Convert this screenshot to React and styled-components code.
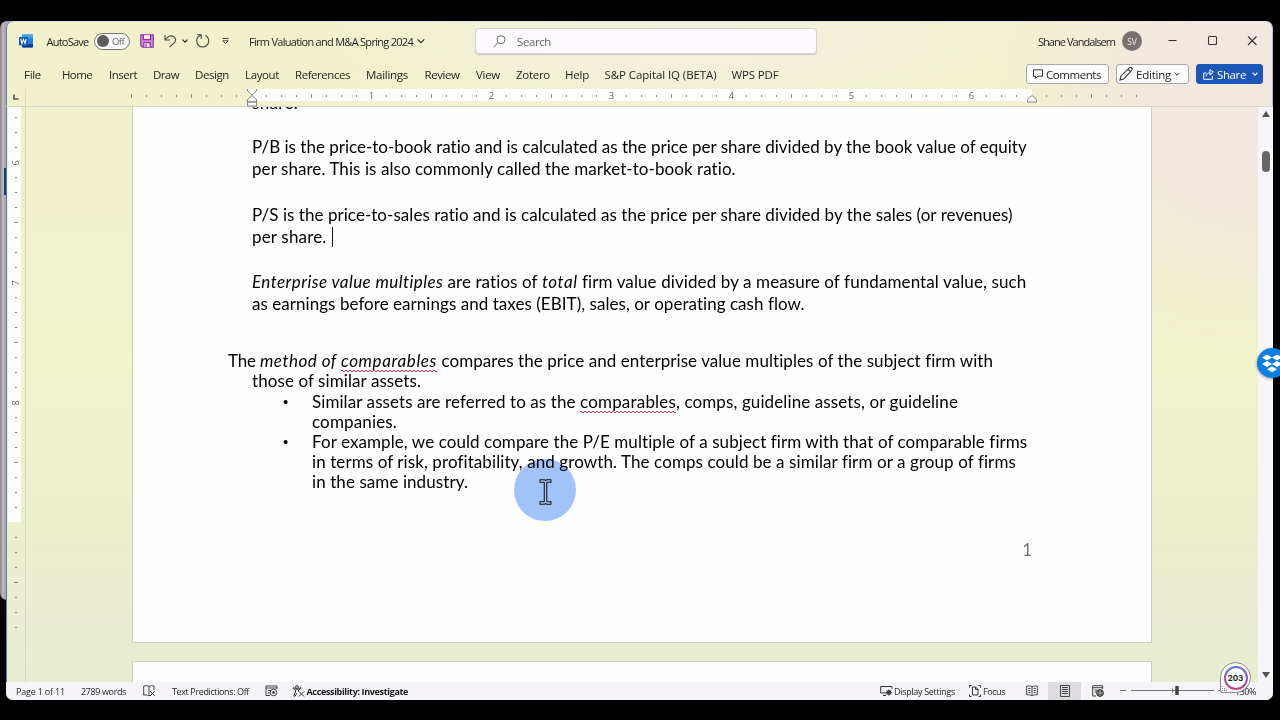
import { useLayoutEffect, useRef, useState } from "react";
import styled, { createGlobalStyle } from "styled-components";

const GlobalStyle = createGlobalStyle`
  * {
    box-sizing: border-box;
  }

  body {
    margin: 0;
    background: #000;
    overflow: hidden;
    font-family: "Open Sans", "Noto Sans", sans-serif;
    color: #262626;
  }

  svg {
    display: block;
    flex: none;
  }
`;

const Desktop = styled.div`
  position: relative;
  width: 1280px;
  height: 720px;
  padding: 21px 7px 20px 6px;
  background: #000;
`;

const BackWindow = styled.div`
  position: absolute;
  left: 0;
  top: 21px;
  width: 16px;
  height: 579px;
  border-radius: 7px;
  background: linear-gradient(90deg, #8f8b91 0 1px, #b9b3ba 2px 4px, #a8a4b0 5px);
`;

const BackWindowMark = styled.div`
  position: absolute;
  left: 4px;
  top: 147px;
  width: 2px;
  height: 27px;
  background: #163a75;
`;

const Window = styled.div`
  position: relative;
  display: flex;
  flex-direction: column;
  width: 1267px;
  height: 679px;
  border-radius: 7px;
  overflow: hidden;
  box-shadow: inset 1px 0 0 #5c7ba5, inset -1px 0 0 #b8bce8, inset 0 1px 0 #e2e0ee;
  background:
    radial-gradient(ellipse 250px 250px at 1235px 80px, #f2e8e2 25%, rgba(242, 232, 226, 0) 100%),
    radial-gradient(ellipse 420px 90px at 690px 20px, rgba(244, 240, 227, 0.9), rgba(244, 240, 227, 0)),
    linear-gradient(180deg, #f1f1cc 0%, #f1f3cb 50%, #eef1cb 68%, #e9ecd2 88%, #e8edd0 100%);
`;

const TitleBar = styled.header`
  display: flex;
  align-items: center;
  height: 40px;
  padding-left: 13px;
`;

const TitleGap = styled.span`
  flex: none;
  width: ${(props) => props.$w}px;
`;

const Toggle = styled.div`
  display: flex;
  align-items: center;
  justify-content: space-between;
  width: 36px;
  height: 17px;
  padding: 0 5px 0 2px;
  border: 1px solid #77746f;
  border-radius: 9px;
  background: #fdfcfd;
`;

const ToggleKnob = styled.span`
  width: 12px;
  height: 12px;
  border-radius: 50%;
  background: #5f5c60;
`;

const SearchBox = styled.div`
  display: flex;
  align-items: center;
  width: 342px;
  height: 26px;
  padding-left: 17px;
  gap: 11px;
  border: 1px solid #d3d1d4;
  border-radius: 4px;
  background: #fdfbfe;
  box-shadow: 0 1px 1px #c8c6c8;
`;

const Avatar = styled.div`
  display: flex;
  align-items: center;
  justify-content: center;
  width: 20px;
  height: 20px;
  border-radius: 50%;
  background: #78736f;
  color: #e5e2e2;
  font-size: 8.5px;
`;

const TabBar = styled.nav`
  display: flex;
  align-items: center;
  height: 26px;
  margin-bottom: 2px;
  padding-left: 18px;
`;

const TabActions = styled.div`
  display: flex;
  gap: 7px;
  margin-left: auto;
  padding-right: 10px;
`;

const ActionButton = styled.button`
  display: flex;
  align-items: center;
  gap: ${(props) => props.$gap || 3}px;
  width: ${(props) => props.$width}px;
  height: 20px;
  padding: 0 0 0 ${(props) => props.$pad}px;
  border: 1px solid ${(props) => (props.$primary ? "#1b56b8" : "#aaa8a6")};
  border-radius: 3px;
  background: ${(props) => (props.$primary ? "#1b56b8" : "#fefdfe")};
  color: ${(props) => (props.$primary ? "#fff" : "#262626")};
  font-family: inherit;
`;

const RulerRow = styled.div`
  height: 18px;
  border-bottom: 1px solid #d6d6c8;
`;

const Workspace = styled.div`
  display: flex;
  flex: 1;
  min-height: 0;
`;

const SideRuler = styled.div`
  flex: none;
  width: 20px;
  border-right: 1px solid #d9d9c4;
`;

const Canvas = styled.main`
  flex: 1;
  min-width: 0;
  padding-left: 106px;
  overflow: hidden;
`;

const Page = styled.article`
  width: 1020px;
  height: ${(props) => props.$height}px;
  margin-bottom: 18px;
  padding: 0 0 0 95px;
  border: 1px solid #cfcfc8;
  border-top-width: ${(props) => (props.$continued ? 0 : 1)}px;
  background: #fefefe;
  overflow: hidden;
`;

const Paragraph = styled.div`
  margin-left: ${(props) => props.$indent || 0}px;
  margin-top: ${(props) => props.$space || 0}px;
  font-family: Lato, "Open Sans", sans-serif;
  font-size: 17px;
  line-height: ${(props) => props.$leading || 22.2}px;
  color: #000;
`;

const TextLine = styled.div`
  display: flex;
  margin-left: ${(props) => props.$indent || 0}px;
`;

const Bullet = styled.span`
  width: 30px;
  padding-left: 1px;
  margin-left: -30px;
  font-family: "Liberation Sans", sans-serif;
  font-size: 15px;
`;

const Misspelled = styled.span`
  padding-bottom: 1px;
  margin-bottom: -1px;
  background:
    linear-gradient(45deg, transparent 35%, #d3324a 35% 65%, transparent 65%) left bottom / 4px 2px repeat-x,
    linear-gradient(135deg, transparent 35%, #d3324a 35% 65%, transparent 65%) 2px 100% / 4px 2px repeat-x;
`;

const Caret = styled.span`
  width: 1px;
  height: 20px;
  margin: 1px 0 -1px 5px;
  background: #111;
`;

const PageNumber = styled.div`
  margin-top: 45.5px;
  padding-right: 119px;
  text-align: right;
  font-family: Lato, "Open Sans", sans-serif;
  font-size: 17px;
  line-height: 24px;
  color: #777;
`;

const ScrollBar = styled.div`
  display: flex;
  flex-direction: column;
  align-items: center;
  width: 15px;
  padding: 4px 0 4px;
  background: #f7f5f9;
`;

const ScrollThumb = styled.div`
  width: 8px;
  height: 21px;
  margin: 34px 0 auto;
  border-radius: 4px;
  background: #69666a;
`;

const StatusBar = styled.footer`
  display: flex;
  align-items: center;
  height: 18px;
  padding-left: 10px;
  background: #f6f4f8;
`;

const ViewButton = styled.span`
  display: flex;
  align-items: center;
  justify-content: center;
  width: 33px;
  height: 18px;
  background: ${(props) => (props.$selected ? "#dddbdf" : "none")};
`;

const FittedText = styled.span`
  display: block;
  flex: none;
  width: ${(props) => props.$width}px;
  white-space: pre;
  font-size: ${(props) => (props.$size ? `${props.$size}px` : "inherit")};
  font-weight: ${(props) => (props.$bold ? 700 : "inherit")};
  color: ${(props) => props.$color || "inherit"};
`;

const PointerHalo = styled.div`
  position: absolute;
  left: 514px;
  top: 459px;
  width: 62px;
  height: 62px;
  border-radius: 50%;
  background: #a1c4fa;
  mix-blend-mode: multiply;
`;

const PointerIcon = styled.svg`
  position: absolute;
  left: 538px;
  top: 478px;
`;

const DropboxBadge = styled.div`
  position: absolute;
  left: 1257px;
  top: 348px;
  width: 30px;
  height: 30px;
  padding: 6px 0 0 5px;
  border-radius: 50%;
  background: #0d7fe0;
  box-shadow: 0 1px 3px rgba(40, 60, 90, 0.5);
`;

const CounterBadge = styled.div`
  position: absolute;
  left: 1220px;
  top: 662px;
  display: flex;
  align-items: center;
  justify-content: center;
  width: 31px;
  height: 31px;
  border: 1px solid #8b898f;
  border-radius: 50% 50% 50% 2px;
  background: #fdfbfd;
`;

const CounterRing = styled.div`
  display: flex;
  align-items: center;
  justify-content: center;
  width: 24px;
  height: 24px;
  border: 2px solid transparent;
  border-radius: 50%;
  background:
    linear-gradient(#fff, #fff) padding-box,
    linear-gradient(#577fd8, #8d5bb0 50%, #c4427d) border-box;
  font-family: Inter, sans-serif;
  font-size: 8px;
  font-weight: 700;
`;

const CounterGrip = styled.svg`
  position: absolute;
  left: 1px;
  bottom: 1px;
`;

// Spreads the letters so the text takes exactly the given width
function Fit({ width, size, bold, color, children }) {
  const ref = useRef(null);
  const [spacing, setSpacing] = useState(0);

  useLayoutEffect(() => {
    const range = document.createRange();
    range.selectNodeContents(ref.current);
    const natural = range.getBoundingClientRect().width;
    setSpacing((width - natural) / ref.current.textContent.length);
  }, [width]);

  return (
    <FittedText
      ref={ref}
      $width={width}
      $size={size}
      $bold={bold}
      $color={color}
      style={{ letterSpacing: `${spacing}px` }}
    >
      {children}
    </FittedText>
  );
}

const tabs = [
  { label: "File", x: 24, width: 17 },
  { label: "Home", x: 62, width: 30 },
  { label: "Insert", x: 109, width: 28 },
  { label: "Draw", x: 153, width: 26 },
  { label: "Design", x: 195, width: 34 },
  { label: "Layout", x: 245, width: 34 },
  { label: "References", x: 295, width: 55 },
  { label: "Mailings", x: 366, width: 42 },
  { label: "Review", x: 424.5, width: 35 },
  { label: "View", x: 476, width: 24 },
  { label: "Zotero", x: 516, width: 34 },
  { label: "Help", x: 565, width: 24 },
  { label: "S&P Capital IQ (BETA)", x: 604.5, width: 112 },
  { label: "WPS PDF", x: 731.5, width: 47 },
];

const Chevron = ({ size = 8, width = 1.1 }) => (
  <svg width={size} height={size} viewBox="0 0 8 8" fill="none" stroke="currentColor" strokeWidth={width}>
    <path d="M.7 2.3 4 5.6 7.3 2.3" />
  </svg>
);

const WordIcon = () => (
  <svg width="14" height="14" viewBox="0 0 14 14">
    <rect x="3" y=".5" width="11" height="13" rx="1" fill="#2b7cd3" />
    <path d="M3 1.5a1 1 0 0 1 1-1h9a1 1 0 0 1 1 1V4H3z" fill="#41a5ee" />
    <path d="M3 10h11v2.5a1 1 0 0 1-1 1H4a1 1 0 0 1-1-1z" fill="#103f91" />
    <rect x="0" y="3" width="9" height="8.5" rx="1" fill="#185abd" />
    <path d="m1.8 5 1.1 4.4L4.5 5.4 6 9.4 7.2 5" fill="none" stroke="#fff" strokeWidth="1.1" />
  </svg>
);

const SaveIcon = () => (
  <svg width="14" height="14" viewBox="0 0 14 14" fill="none" stroke="#95309c" strokeWidth="1.2">
    <path d="M.8.8h12.4v12.4H2.6L.8 11.4z" fill="#d28edb" />
    <path d="M3.4 1v4.6h7.2V1M3.8 13V8.6h6.4V13" fill="#f7eaf5" />
    <path d="M6 10v3" />
  </svg>
);

const HorizontalRuler = () => {
  const marks = [];
  for (let i = 0; i <= 67; i++) {
    const offset = i * 15 - 120;
    const x = 246 + offset;
    if (offset === 0 || offset === 780) continue;
    if (offset > 0 && offset < 780 && offset % 120 === 0) {
      marks.push(
        <text key={i} x={x - 0.5} y="10.3" textAnchor="middle" fontSize="9.5" fill="#666">
          {offset / 120}
        </text>
      );
    } else {
      const tall = offset % 60 === 0;
      marks.push(<rect key={i} x={x - 1} y={tall ? 5 : 6} width="1" height={tall ? 4 : 2} fill="#8d8c85" />);
    }
  }

  return (
    <svg width="1266" height="20" viewBox="0 0 1266 20">
      <rect x="246" width="780" height="12" fill="#fefefe" />
      <path d="M8 5.5v4.5h4.5" fill="none" stroke="#555" strokeWidth="1.7" />
      <path d="M19.5 0v18" stroke="#dddcc8" />
      {marks}
      <g fill="#fdfdfd" stroke="#858585">
        <path d="M241.5-.5h9v2.5l-4.5 4-4.5-4zM246 6.5l4.5 4v2.5h-9v-2.5zM241.5 13h9v4h-9z" />
        <path d="m1026 6.5 4.5 4v2.5h-9v-2.5z" />
      </g>
    </svg>
  );
};

const VerticalRuler = () => {
  const marks = [];
  for (let y = 11; y <= 521; y += 15) {
    const fromSix = y - 56;
    if (y === 416) continue;
    if (fromSix % 120 === 0 && y < 416) {
      marks.push(
        <text key={y} transform={`translate(13 ${y}) rotate(-90)`} textAnchor="middle" fontSize="9" fill="#666">
          {6 + fromSix / 120}
        </text>
      );
    } else {
      const tall = fromSix % 60 === 0;
      marks.push(<rect key={y} x={tall ? 8 : 9} y={y - 1} width={tall ? 4 : 2} height="1" fill="#8d8c85" />);
    }
  }

  return (
    <svg width="19" height="575" viewBox="0 0 19 575">
      <rect x="2" width="13" height="415" fill="#fefefe" />
      {marks}
    </svg>
  );
};

const QuickAccess = () => (
  <>
    <WordIcon />
    <TitleGap $w={13.5} />
    <Fit width={42} size={11}>AutoSave</Fit>
    <TitleGap $w={5.5} />
    <Toggle>
      <ToggleKnob />
      <Fit width={12} size={9.5} color="#666">Off</Fit>
    </Toggle>
    <TitleGap $w={10} />
    <SaveIcon />
    <TitleGap $w={10} />
    <svg width="14" height="14" viewBox="0 0 14 14" fill="none" stroke="#4d4c45" strokeWidth="1.1">
      <path d="M1 1v5h5M1.3 5.8C3.500 2.5 7 .8 9.700 2.6c2.500 1.800 2.400 4.300.5 6.200L5.500 13.200" />
    </svg>
    <TitleGap $w={4} />
    <Chevron size={6} width={1.5} />
    <TitleGap $w={8} />
    <svg width="14" height="14" viewBox="0 0 14 14" fill="none" stroke="#4d4c45" strokeWidth="1.1">
      <path d="M1 .8h4.2V5M5 1.2C2.5 2 .7 4.2.7 7a6 6 0 0 0 12 0c0-2.4-1.3-4.4-3.4-5.4" />
    </svg>
    <TitleGap $w={12} />
    <svg width="7" height="8" viewBox="0 0 7 8" fill="none" stroke="#444" strokeWidth="1">
      <path d="M.5 1.5h6M.8 3.8h5.4L3.5 6.5z" />
    </svg>
  </>
);

const documentTop = [
  { text: "P/B is the price-to-book ratio and is calculated as the price per share divided by the book value of equity", width: 775 },
  { text: "per share. This is also commonly called the market-to-book ratio.", width: 484 },
];

export default function App() {
  return (
    <>
      <GlobalStyle />
      <Desktop>
        <BackWindow>
          <BackWindowMark />
        </BackWindow>

        <Window>
          <TitleBar>
            <QuickAccess />
            <TitleGap $w={20} />
            <Fit width={164} size={11}>Firm Valuation and M&A Spring 2024</Fit>
            <TitleGap $w={4} />
            <Chevron />
            <TitleGap $w={50} />
            <SearchBox>
              <svg width="13" height="13" viewBox="0 0 13 13" fill="none" stroke="#666" strokeWidth="1">
                <circle cx="8" cy="4.7" r="4" />
                <path d="M5 7.6.7 12.3" />
              </svg>
              <Fit width={34} size={11.5} color="#666">Search</Fit>
            </SearchBox>
            <TitleGap $w={221} />
            <Fit width={77} size={11}>Shane Vandalsem</Fit>
            <TitleGap $w={7} />
            <Avatar>SV</Avatar>
            <TitleGap $w={26} />
            <svg width="89" height="12" viewBox="0 0 89 12" fill="none" stroke="#333" strokeWidth="1.1">
              <path d="M.5 5.5h8M80 1.5l8.5 8.5M88.5 1.5 80 10" />
              <rect x="40.5" y="1.5" width="8" height="8" rx="1" />
            </svg>
          </TitleBar>

          <TabBar>
            {tabs.map((tab, i) => {
              const previous = tabs[i - 1];
              const gap = previous ? tab.x - previous.x - previous.width : 0;
              return (
                <span key={tab.label} style={{ marginLeft: gap }}>
                  <Fit width={tab.width} size={11.5}>{tab.label}</Fit>
                </span>
              );
            })}
            <TabActions>
              <ActionButton $width={83} $pad={6}>
                <svg width="10" height="10" viewBox="0 0 10 10" fill="none" stroke="#333">
                  <path d="M.5.8h9v6.400H5L2.500 9.500V7.200h-2z" />
                </svg>
                <Fit width={55} size={11.5}>Comments</Fit>
              </ActionButton>
              <ActionButton $width={73} $pad={2}>
                <svg width="14" height="14" viewBox="0 0 14 14" fill="none" stroke="#333" strokeWidth="1.1">
                  <path d="m1 13 .9-3.8L10.3.9c.7-.6 1.5-.5 2.2.1.7.8.8 1.6.1 2.3L4.7 12zM9 2.3l2.6 2.6" />
                </svg>
                <Fit width={35} size={11.5}>Editing</Fit>
                <Chevron size={6} width={1.3} />
              </ActionButton>
              <ActionButton $width={67} $pad={6} $gap={3} $primary>
                <svg width="11" height="11" viewBox="0 0 11 11" fill="none" stroke="currentColor">
                  <path d="M3.5 4H.7v6.3h8.6V7M3 7.5c.4-2.5 2-3.7 4-3.7V6l3.3-2.9L7 .6v3.200" />
                </svg>
                <Fit width={29} size={11.5}>Share</Fit>
                <TitleGap $w={0} />
                <Chevron size={6} width={1.5} />
              </ActionButton>
            </TabActions>
          </TabBar>

          <RulerRow>
            <HorizontalRuler />
          </RulerRow>

          <Workspace>
            <SideRuler>
              <VerticalRuler />
            </SideRuler>

            <Canvas>
              <Page $height={536} $continued>
                <Paragraph $indent={24} $space={-15}>
                  <Fit width={46}>share.</Fit>
                </Paragraph>
                <Paragraph $indent={24} $space={22}>
                  {documentTop.map((line) => (
                    <Fit key={line.text} width={line.width}>{line.text}</Fit>
                  ))}
                </Paragraph>
                <Paragraph $indent={24} $space={23}>
                  <Fit width={761}>
                    P/S is the price-to-sales ratio and is calculated as the price per share divided by the sales (or revenues)
                  </Fit>
                  <TextLine>
                    <Fit width={74.5}>per share.</Fit>
                    <Caret />
                  </TextLine>
                </Paragraph>
                <Paragraph $indent={24} $space={22.6}>
                  <TextLine>
                    <Fit width={195.5}><i>Enterprise value multiples </i></Fit>
                    <Fit width={94.5}>are ratios of </Fit>
                    <Fit width={40}><i>total </i></Fit>
                    <Fit width={444}>firm value divided by a measure of fundamental value, such</Fit>
                  </TextLine>
                  <Fit width={553}>as earnings before earnings and taxes (EBIT), sales, or operating cash flow.</Fit>
                </Paragraph>
                <Paragraph $space={36.2} $leading={20.2}>
                  <TextLine>
                    <Fit width={32}>The </Fit>
                    <Fit width={81}><i>method of </i></Fit>
                    <Misspelled><Fit width={96}><i>comparables</i></Fit></Misspelled>
                    <Fit width={556}> compares the price and enterprise value multiples of the subject firm with</Fit>
                  </TextLine>
                  <TextLine $indent={24}>
                    <Fit width={169}>those of similar assets.</Fit>
                  </TextLine>
                  <TextLine $indent={84}>
                    <Bullet>•</Bullet>
                    <Fit width={268}>Similar assets are referred to as the </Fit>
                    <Misspelled><Fit width={96}>comparables</Fit></Misspelled>
                    <Fit width={282}>, comps, guideline assets, or guideline</Fit>
                  </TextLine>
                  <TextLine $indent={84}>
                    <Fit width={85}>companies.</Fit>
                  </TextLine>
                  <TextLine $indent={84}>
                    <Bullet>•</Bullet>
                    <Fit width={715}>For example, we could compare the P/E multiple of a subject firm with that of comparable firms</Fit>
                  </TextLine>
                  <TextLine $indent={84}>
                    <Fit width={703}>in terms of risk, profitability, and growth. The comps could be a similar firm or a group of firms</Fit>
                  </TextLine>
                  <TextLine $indent={84}>
                    <Fit width={156}>in the same industry.</Fit>
                  </TextLine>
                </Paragraph>
                <PageNumber>1</PageNumber>
              </Page>
              <Page $height={60} />
            </Canvas>

            <ScrollBar>
              <svg width="8" height="6" viewBox="0 0 8 6"><path d="M4 0 8 6H0z" fill="#555" /></svg>
              <ScrollThumb />
              <svg width="8" height="6" viewBox="0 0 8 6"><path d="M4 6 0 0h8z" fill="#555" /></svg>
            </ScrollBar>
          </Workspace>

          <StatusBar>
            <Fit width={49} size={9}>Page 1 of 11</Fit>
            <TitleGap $w={16} />
            <Fit width={45} size={9}>2789 words</Fit>
            <TitleGap $w={17} />
            <svg width="13" height="12" viewBox="0 0 13 12" fill="none" stroke="#444">
              <path d="M6 1.5v8M6 1.5C5 .6 2.5.6.7 1v9c2 0 4-.4 5.3 1l1-1M6 1.5C7.5.6 9.5.6 11 1v4M7 6l4.8 5M11.8 6 7 11" />
            </svg>
            <TitleGap $w={16} />
            <Fit width={77} size={9}>Text Predictions: Off</Fit>
            <TitleGap $w={16} />
            <svg width="13" height="12" viewBox="0 0 13 12" fill="none" stroke="#444">
              <path d="M5 10.5H1V1h11v3M1 3h11M3 5.5h3M3 8h2" />
              <circle cx="8.5" cy="7.5" r="3.3" />
              <circle cx="8.5" cy="7.5" r="1" fill="#333" />
            </svg>
            <TitleGap $w={14} />
            <svg width="13" height="12" viewBox="0 0 13 12" fill="none" stroke="#333">
              <circle cx="5" cy="2" r="1.4" />
              <path d="M1 3.5 3.5 5v2L1.8 11l1.2.3L5 8M9.5 3 6.5 5v1.5M1 3.5l.6-1L5 4.5l4-2M7 6.5l5 5M12 6.5l-5 5" />
            </svg>
            <TitleGap $w={1.5} />
            <Fit width={101.5} size={9} bold color="#151515">Accessibility: Investigate</Fit>
            <TitleGap $w={472} />
            <svg width="13" height="12" viewBox="0 0 13 12" fill="none" stroke="#333">
              <path d="M12 4V1.5H.7V8H6M3 10.5h3" />
              <circle cx="8.8" cy="7.5" r="2" />
              <path d="M8.8 4.5v6M5.8 7.5h6M6.7 5.4l4.2 4.2M10.9 5.4 6.7 9.6" />
            </svg>
            <TitleGap $w={1} />
            <Fit width={61} size={9}>Display Settings</Fit>
            <TitleGap $w={14} />
            <svg width="12" height="12" viewBox="0 0 12 12" fill="none" stroke="#333">
              <path d="M2.5.5h-2v2M9.5.5h2v2M2.5 11.5h-2v-2M9.5 11.5h2v-2M3.5 2h3L9 4.500V10H3.500zM6.500 2v2.500H9" />
            </svg>
            <TitleGap $w={2} />
            <Fit width={22} size={9}>Focus</Fit>
            <TitleGap $w={10} />
            <ViewButton>
              <svg width="12" height="12" viewBox="0 0 12 12" fill="none" stroke="#444">
                <path d="M6 1.8v9M6 1.8C4.5.8 2.5.8.7 1.2v8.6c2-.3 4 0 5.3 1 1.5-1 3.3-1.3 5.3-1V1.2C9.5.8 7.5.8 6 1.8M2.3 3.5h2M2.3 5.5h2M2.3 7.5h2M7.7 3.5h2M7.7 5.5h2M7.7 7.5h2" />
              </svg>
            </ViewButton>
            <ViewButton $selected>
              <svg width="10" height="12" viewBox="0 0 10 12" fill="none" stroke="#444">
                <path d="M.5.5h9v11h-9zM2 2.5h6M2 4.5h6M2 6.5h6M2 8.5h6" />
              </svg>
            </ViewButton>
            <ViewButton>
              <svg width="12" height="12" viewBox="0 0 12 12" fill="none" stroke="#444">
                <path d="M4 11H.7V.7h10V4M.7 2.7h10M2.5 5h3M2.5 7h2" />
                <circle cx="8" cy="8" r="3.4" fill="#444" />
                <path d="M5 8h6M8 5v6" stroke="#eee" strokeWidth=".6" />
              </svg>
            </ViewButton>
            <TitleGap $w={6} />
            <svg width="105" height="12" viewBox="0 0 105 12" fill="none" stroke="#777">
              <path d="M0 5.5h6M11 5.5h83M52.500 3.500v4M98 5.500h6" />
              <path d="M57 1v9" stroke="#444" strokeWidth="3.5" />
            </svg>
            <TitleGap $w={10} />
            <Fit width={21} size={9}>130%</Fit>
          </StatusBar>
        </Window>

        <PointerHalo />
        <PointerIcon width="15" height="28" viewBox="0 0 15 28">
          <path d="M1.500 3H6l1.500 1L9 3h4.500M7.500 4v20M1.500 25H6l1.500-1L9 25h4.500" fill="none" stroke="#111" strokeWidth="3.5" />
          <path d="M2.500 3H6l1.500 1L9 3h3.500M7.500 4v20M2.500 25H6l1.500-1L9 25h3.500" fill="none" stroke="#a9c8fa" strokeWidth="1.4" />
        </PointerIcon>

        <DropboxBadge>
          <svg width="20" height="19" viewBox="0 0 20 19" fill="#fff">
            <path d="m5 .5 5 3-5 3-5-3zM15 .5l5 3-5 3-5-3zM5 7l5 3-5 3-5-3zM15 7l5 3-5 3-5-3zM10 12.2l5 3-5 3-5-3z" />
          </svg>
        </DropboxBadge>
        <CounterBadge>
          <CounterRing>203</CounterRing>
          <CounterGrip width="5" height="5" viewBox="0 0 5 5" fill="#777">
            <path d="M0 0h1v1H0zM0 2h1v1H0zM0 4h1v1H0zM2 2h1v1H2zM2 4h1v1H2zM4 4h1v1H4z" />
          </CounterGrip>
        </CounterBadge>
      </Desktop>
    </>
  );
}
